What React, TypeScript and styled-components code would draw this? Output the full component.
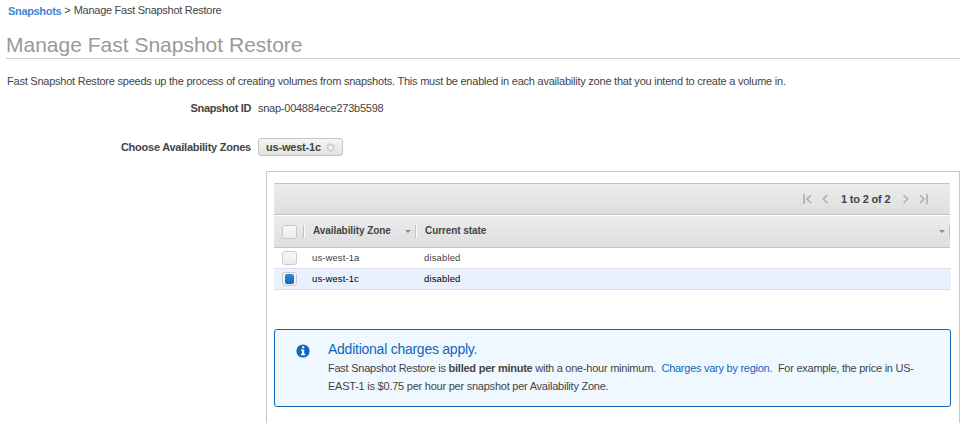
import React from "react";
import styled, { createGlobalStyle } from "styled-components";

const GlobalStyle = createGlobalStyle`
  * { box-sizing: border-box; }
  html, body { margin: 0; padding: 0; }
  body {
    width: 963px;
    height: 423px;
    overflow: hidden;
    background: #fff;
    color: #444;
    font-family: "Liberation Sans", Arial, sans-serif;
    font-size: 11px;
  }
`;

const Page = styled.main`
  width: 963px;
  height: 423px;
  overflow: hidden;
  display: flex;
  flex-direction: column;
  padding-left: 6px;

  > * { flex-shrink: 0; }
`;

const Text = styled.span<{ $ls?: number; $bold?: boolean }>`
  letter-spacing: ${(p) => p.$ls ?? 0}px;
  font-weight: ${(p) => (p.$bold ? 700 : 400)};
  white-space: pre;
`;

const Breadcrumb = styled.nav`
  display: flex;
  height: 22px;
  line-height: 21px;
  padding-left: 2px;
  gap: 3px;
`;

const CrumbLink = styled.a`
  color: #3f86dc;
  font-weight: 700;
  line-height: 23px;
`;

const Title = styled.h1`
  margin: 9px 0 0;
  width: 954px;
  height: 28px;
  line-height: 28px;
  font-size: 21px;
  font-weight: 400;
  color: #999;
  border-bottom: 1px solid #ccc;
`;

const Description = styled.p`
  margin: 0;
  padding: 15px 0 0 1px;
  height: 40px;
  line-height: 15px;
`;

const Field = styled.div<{ $height: number }>`
  display: grid;
  grid-template-columns: 245px 1fr;
  column-gap: 7px;
  height: ${(p) => p.$height}px;
  align-items: start;
  line-height: 18px;
`;

const FieldLabel = styled.label`
  text-align: right;
  font-weight: 700;
`;

const Chip = styled.div`
  display: flex;
  align-items: center;
  gap: 5px;
  width: 85px;
  height: 18px;
  padding-left: 7px;
  border: 1px solid #c4c4c4;
  border-radius: 3px;
  background: linear-gradient(#f6f6f6, #e2e2e2);
  font-weight: 700;
`;

const Panel = styled.section`
  width: 694px;
  height: 280px;
  margin-left: 260px;
  padding: 11px 8px 0 7px;
  border: 1px solid #c8c8c8;
`;

const Toolbar = styled.div`
  display: flex;
  align-items: center;
  width: 676px;
  height: 32px;
  padding-left: 529px;
  border-top: 1px solid #c4c4c4;
  border-bottom: 1px solid #c4c4c4;
  background: linear-gradient(#ececec, #dedede);
`;

const PageCount = styled.span`
  width: 50px;
  margin: 0 12px 0 12px;
  font-weight: 700;
  white-space: nowrap;
`;

const HeaderRow = styled.div`
  display: grid;
  grid-template-columns: 30px 112px 534px;
  align-items: center;
  width: 676px;
  height: 33px;
  border-top: 1px solid #fff;
  border-bottom: 1px solid #c4c4c4;
  background: linear-gradient(#ececec, #dedede);
  font-size: 10px;
`;

const HeaderCell = styled.div<{ $indent?: number }>`
  display: flex;
  align-items: center;
  justify-content: space-between;
  height: 13px;
  padding: 0 4px 0 ${(p) => p.$indent ?? 9}px;
  border-right: 1px solid #c2c2c2;
  box-shadow: 1px 0 #fafafa;
  font-weight: 700;

  > ${Text} { padding-bottom: 2px; }
`;

const LastHeaderCell = styled(HeaderCell)`
  box-shadow: none;
`;

const SortArrow = styled.i`
  border: 3px solid transparent;
  border-top-color: #8c8c8c;
  border-bottom: 0;
`;

const Row = styled.div<{ $selected?: boolean }>`
  display: grid;
  grid-template-columns: 38px 112px 1fr;
  align-items: center;
  width: 677px;
  height: 21px;
  border-bottom: 1px solid #dcdfe5;
  background: ${(p) => (p.$selected ? "#e9f1fe" : "#fff")};
  color: ${(p) => (p.$selected ? "#000" : "#444")};
  font-size: 9.5px;

  > ${Text} { padding-bottom: 2px; }
`;

const CheckBox = styled.span<{ $checked?: boolean }>`
  display: block;
  flex: none;
  width: 15px;
  height: 14px;
  margin-left: 8px;
  padding: 2px;
  border: 1px solid #c9c9c9;
  border-radius: 3px;
  background: linear-gradient(#f8f8f8, #ececec);

  &::after {
    content: "";
    display: ${(p) => (p.$checked ? "block" : "none")};
    width: 9px;
    height: 10px;
    margin-top: -1px;
    border-radius: 2px;
    background: linear-gradient(#2e88de, #1166bb);
  }
`;

const Alert = styled.aside`
  display: flex;
  width: 677px;
  height: 78px;
  margin-top: 39px;
  padding: 9px 0 0 21px;
  border: 1px solid #1166bb;
  border-radius: 3px;
  background: #f0f8ff;
`;

const AlertIcon = styled.svg`
  flex: none;
  margin: 5px 18px 0 0;
`;

const AlertTitle = styled.h2`
  margin: 0;
  height: 20px;
  line-height: 20px;
  font-size: 14px;
  font-weight: 400;
  color: #1166bb;
`;

const AlertLine = styled.div`
  height: 18px;
  line-height: 18px;
  white-space: pre;
`;

const AlertLink = styled.a`
  color: #1166bb;
`;

const PagerSvg = styled.svg<{ $gap: number }>`
  flex: none;
  margin-right: ${(p) => p.$gap}px;
`;

const PagerIcon = ({ d, w, gap }: { d: string; w: number; gap: number }) => (
  <PagerSvg $gap={gap} width={w} height="10" viewBox={`0 0 ${w} 10`} fill="none" stroke="#b0b0b0" strokeWidth="1.7">
    <path d={d} />
  </PagerSvg>
);

export default function App() {
  return (
    <>
      <GlobalStyle />
      <Page>
        <Breadcrumb>
          <CrumbLink><Text $bold $ls={-0.33}>Snapshots</Text></CrumbLink>
          <Text>&gt;</Text>
          <Text $ls={-0.27}>Manage Fast Snapshot Restore</Text>
        </Breadcrumb>
        <Title><Text>Manage Fast Snapshot Restore</Text></Title>
        <Description>
          <Text $ls={-0.23}>Fast Snapshot Restore speeds up the process of creating volumes from snapshots. This must be enabled in each availability zone that you intend to create a volume in.</Text>
        </Description>
        <Field $height={39}>
          <FieldLabel><Text $bold $ls={-0.34}>Snapshot ID</Text></FieldLabel>
          <Text $ls={-0.25}>snap-004884ece273b5598</Text>
        </Field>
        <Field $height={33}>
          <FieldLabel><Text $bold $ls={-0.24}>Choose Availability Zones</Text></FieldLabel>
          <Chip>
            <Text $bold $ls={-0.2}>us-west-1c</Text>
            <svg width="9" height="9" viewBox="0 0 9 9">
              <circle cx="4.5" cy="4.5" r="4.2" fill="#d3d3d3" />
              <path d="M3 3l3 3M6 3L3 6" stroke="#fff" strokeWidth="1.1" />
            </svg>
          </Chip>
        </Field>
        <Panel>
          <Toolbar>
            <PagerIcon w={9} gap={10} d="M1 0v10M8 1L4 5l4 4" />
            <PagerIcon w={6} gap={1} d="M5.4 1L1.4 5l4 4" />
            <PageCount><Text $bold $ls={-0.18}>1 to 2 of 2</Text></PageCount>
            <PagerIcon w={6} gap={10} d="M.6 1l4 4-4 4" />
            <PagerIcon w={9} gap={0} d="M1 1l4 4-4 4M8 0v10" />
          </Toolbar>
          <HeaderRow>
            <HeaderCell $indent={0}><CheckBox /></HeaderCell>
            <HeaderCell><Text $bold $ls={-0.08}>Availability Zone</Text><SortArrow /></HeaderCell>
            <LastHeaderCell><Text $bold $ls={-0.08}>Current state</Text><SortArrow /></LastHeaderCell>
          </HeaderRow>
          <Row>
            <CheckBox />
            <Text $ls={0.1}>us-west-1a</Text>
            <Text $ls={0.14}>disabled</Text>
          </Row>
          <Row $selected>
            <CheckBox $checked />
            <Text $ls={0.1}>us-west-1c</Text>
            <Text $ls={0.14}>disabled</Text>
          </Row>
          <Alert>
            <AlertIcon width="14" height="14" viewBox="0 0 14 14">
              <circle cx="7" cy="7" r="6.6" fill="#1166bb" />
              <path d="M6 2.3h2.2v2H6zM5 5.4h3.2v4.3h1v1.5H5V9.7h1V6.9H5z" fill="#fff" />
            </AlertIcon>
            <div>
              <AlertTitle><Text $ls={-0.25}>Additional charges apply.</Text></AlertTitle>
              <AlertLine>
                <Text $ls={-0.24}>Fast Snapshot Restore is </Text>
                <Text $bold $ls={-0.24}>billed per minute</Text>
                <Text $ls={-0.25}> with a one-hour minimum.  </Text>
                <AlertLink><Text $ls={-0.26}>Charges vary by region.</Text></AlertLink>
                <Text $ls={-0.25}>  For example, the price in US-</Text>
              </AlertLine>
              <AlertLine><Text $ls={-0.235}>EAST-1 is $0.75 per hour per snapshot per Availability Zone.</Text></AlertLine>
            </div>
          </Alert>
        </Panel>
      </Page>
    </>
  );
}
